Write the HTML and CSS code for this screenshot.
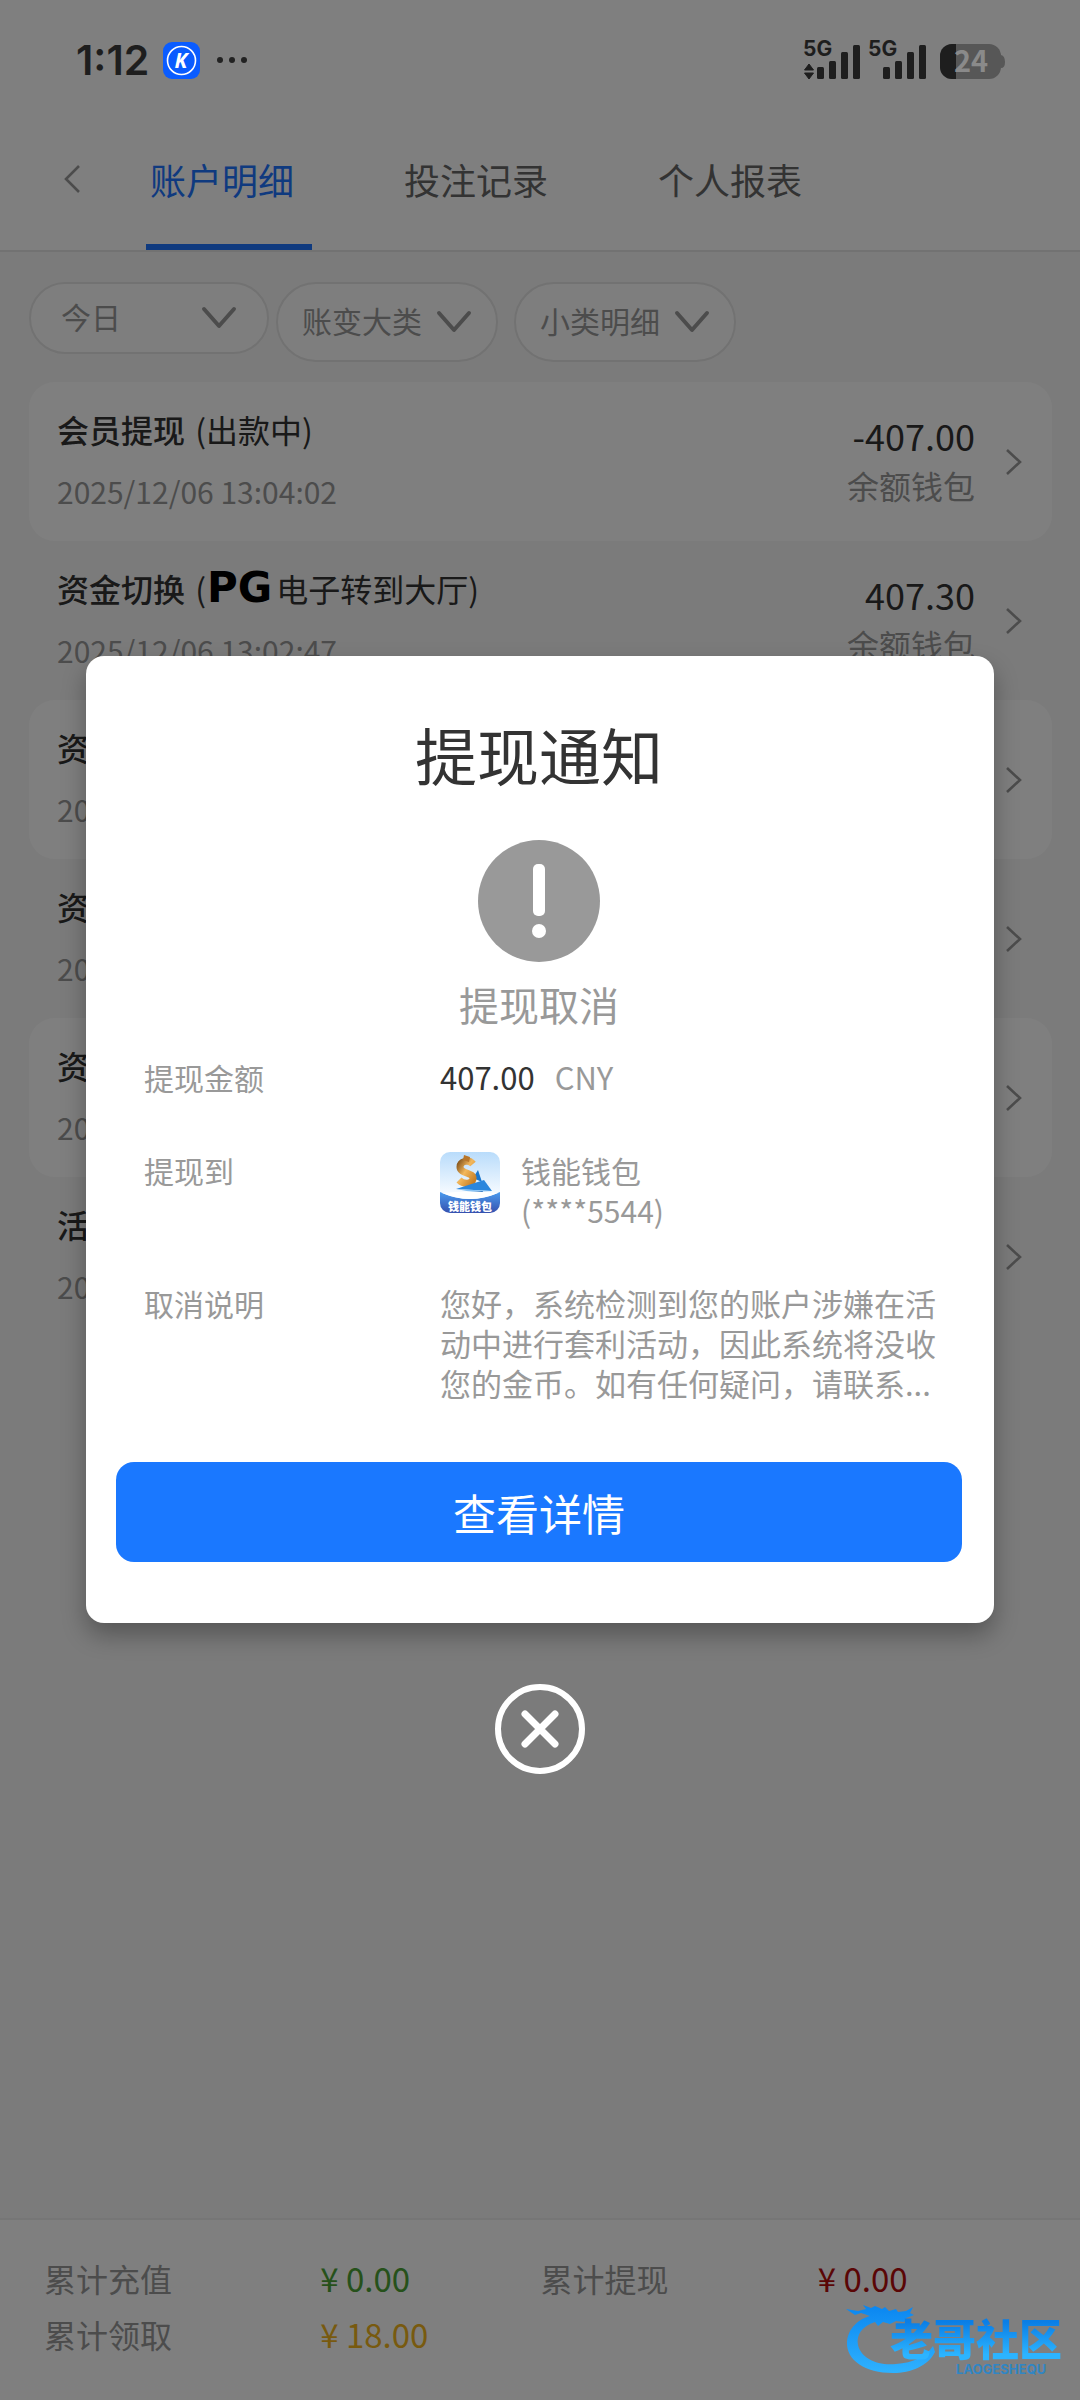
FILE: index.html
```html
<!DOCTYPE html>
<html lang="zh-CN">
<head>
<meta charset="utf-8">
<meta name="viewport" content="width=device-width, initial-scale=1">
<title>账户明细</title>
<link rel="stylesheet" href="styles.css">
</head>
<body>
<svg width="0" height="0" class="defs" aria-hidden="true">
  <symbol id="chev-right" viewBox="0 0 18 30"><path d="M2 3 L15 15 L2 27" fill="none" stroke="currentColor" stroke-width="2.6"/></symbol>
  <symbol id="chev-down" viewBox="0 0 36 24"><path d="M3 3 L18 20 L33 3" fill="none" stroke="currentColor" stroke-width="4" stroke-linecap="round" stroke-linejoin="round"/></symbol>
</svg>
<div class="page">
  <div class="status">
    <span class="clock">1:12</span>
    <svg class="app-icon" width="37" height="37" viewBox="0 0 37 37" aria-hidden="true">
      <rect width="37" height="37" rx="9" fill="#0a5cff"/>
      <circle cx="18.500" cy="18.500" r="14" fill="none" stroke="#fff" stroke-width="1.600"/>
      <text x="18" y="26" text-anchor="middle" class="app-letter">K</text>
    </svg>
    <svg width="32" height="8" viewBox="0 0 32 8" fill="#222" aria-hidden="true"><circle cx="4" cy="4" r="3"/><circle cx="16" cy="4" r="3"/><circle cx="28" cy="4" r="3"/></svg>
    <svg class="signals" width="206" height="56" viewBox="-2 -6 206 56" aria-hidden="true">
      <g fill="#1e1e1e">
        <text x="0" y="18" class="net">5G</text>
        <path d="M6 26l4.500 6h-9zM6 41l4.500-6h-9z" stroke="#1e1e1e" stroke-linejoin="round"/>
        <rect x="14" y="29" width="7" height="12" rx="1.500"/><rect x="26" y="23" width="7" height="18" rx="1.500"/><rect x="38" y="14" width="7" height="27" rx="1.500"/><rect x="50" y="7" width="7" height="34" rx="1.500"/>
        <text x="65" y="18" class="net">5G</text>
        <rect x="80" y="29" width="7" height="12" rx="1.500"/><rect x="92" y="23" width="7" height="18" rx="1.500"/><rect x="104" y="14" width="7" height="27" rx="1.500"/><rect x="116" y="7" width="7" height="34" rx="1.500"/>
        <rect x="137" y="6" width="61" height="35" rx="12" fill="#575757"/>
        <path d="M198 17q4 1 4 7t-4 6z" fill="#575757"/>
        <path d="M153 6h-4a12 12 0 0 0-12 12v11a12 12 0 0 0 12 12h4z"/>
      </g>
      <text x="151" y="34" class="charge">24</text>
    </svg>
  </div>

  <header class="topbar">
    <button class="back" type="button" aria-label="返回"><svg width="18" height="30" viewBox="0 0 18 30"><path d="M16 2 L3 15 L16 28" fill="none" stroke="currentColor" stroke-width="2.600"/></svg></button>
    <nav class="tabs">
      <a class="tab tab-active" href="#detail">账户明细</a>
      <a class="tab" href="#bets">投注记录</a>
      <a class="tab" href="#report">个人报表</a>
    </nav>
  </header>

  <main class="content">
    <div class="filters">
      <div class="filter filter-day"><select aria-label="日期"><option>今日</option></select><svg width="36" height="24"><use href="#chev-down"/></svg></div>
      <div class="filter"><select aria-label="账变大类"><option>账变大类</option></select><svg width="36" height="24"><use href="#chev-down"/></svg></div>
      <div class="filter filter-last"><select aria-label="小类明细"><option>小类明细</option></select><svg width="36" height="24"><use href="#chev-down"/></svg></div>
    </div>
    <ul class="records">
      <li class="record">
        <div class="info"><p class="name"><b>会员提现</b> (出款中)</p><time class="date">2025/12/06 13:04:02</time></div>
        <div class="sum"><p class="amount">-407.00</p><p class="wallet">余额钱包</p></div>
        <svg class="go" width="18" height="30"><use href="#chev-right"/></svg>
      </li>
      <li class="record">
        <div class="info"><p class="name"><b>资金切换</b> (<span class="pg">PG</span>电子转到大厅)</p><time class="date">2025/12/06 13:02:47</time></div>
        <div class="sum"><p class="amount">407.30</p><p class="wallet">余额钱包</p></div>
        <svg class="go" width="18" height="30"><use href="#chev-right"/></svg>
      </li>
      <li class="record">
        <div class="info"><p class="name"><b>资金切换</b></p><time class="date">2025/12/06</time></div>
        <svg class="go" width="18" height="30"><use href="#chev-right"/></svg>
      </li>
      <li class="record">
        <div class="info"><p class="name"><b>资金切换</b></p><time class="date">2025/12/06</time></div>
        <svg class="go" width="18" height="30"><use href="#chev-right"/></svg>
      </li>
      <li class="record">
        <div class="info"><p class="name"><b>资金切换</b></p><time class="date">2025/12/06</time></div>
        <svg class="go" width="18" height="30"><use href="#chev-right"/></svg>
      </li>
      <li class="record">
        <div class="info"><p class="name"><b>活动</b></p><time class="date">2025/12/06</time></div>
        <svg class="go" width="18" height="30"><use href="#chev-right"/></svg>
      </li>
    </ul>
  </main>

  <footer class="totals">
    <span>累计充值</span><span class="total green">¥ 0.00</span>
    <span>累计提现</span><span class="total red">¥ 0.00</span>
    <span>累计领取</span><span class="total gold">¥ 18.00</span>
  </footer>

  <div class="overlay">
    <section class="modal" role="dialog" aria-labelledby="modal-title">
      <h1 class="modal-title" id="modal-title">提现通知</h1>
      <svg class="alert" width="122" height="122" viewBox="0 0 122 122" aria-hidden="true">
        <circle cx="61" cy="61" r="61" fill="#999"/>
        <rect x="55" y="24" width="12" height="52" rx="5" fill="#fff"/>
        <circle cx="61" cy="91" r="7" fill="#fff"/>
      </svg>
      <p class="state">提现取消</p>
      <dl class="facts">
        <dt>提现金额</dt>
        <dd><span class="value">407.00</span><span class="unit">CNY</span></dd>
        <dt>提现到</dt>
        <dd class="target">
          <svg class="wallet-icon" width="60" height="61" viewBox="0 0 60 61" aria-hidden="true">
            <defs>
              <linearGradient id="sky" x1="0" y1="0" x2="0" y2="1"><stop offset="0" stop-color="#b9dcfb"/><stop offset=".65" stop-color="#f3f9ff"/></linearGradient>
              <linearGradient id="sea" x1="0" y1="0" x2="0" y2="1"><stop offset="0" stop-color="#4b9bee"/><stop offset="1" stop-color="#3550ae"/></linearGradient>
              <linearGradient id="coin" x1="0" y1="0" x2="1" y2="1"><stop offset="0" stop-color="#8a5a20"/><stop offset=".45" stop-color="#f3b85c"/><stop offset="1" stop-color="#c87f25"/></linearGradient>
              <clipPath id="tile"><rect width="60" height="61" rx="10"/></clipPath>
            </defs>
            <g clip-path="url(#tile)">
              <rect width="60" height="61" fill="url(#sky)"/>
              <path d="M33 26l5-8 4 12z" fill="#1b78cf"/>
              <path d="M33 12c-4-5-13-3-13 3 0 7 14 5 13 12-1 5-9 6-14 1" fill="none" stroke="url(#coin)" stroke-width="7"/>
              <path d="M24 3l6 2-1 5-6-2z" fill="#b8762a"/>
              <path d="M16 37l28-9 8 11z" fill="#2a86dd"/><path d="M16 37l36 2-20 1z" fill="#86c2f5"/><path d="M32 40l11-1-2 4z" fill="#1b66b5"/>
              <path d="M0 40q30 14 60 0v21H0z" fill="url(#sea)"/>
              <path d="M2 41q28-3 56 0-28 12-56 0z" fill="#fff"/>
              <text x="30" y="59" text-anchor="middle" class="icon-text">钱能钱包</text>
            </g>
          </svg>
          <div>钱能钱包<br>(****5544)</div>
        </dd>
        <dt>取消说明</dt>
        <dd class="reason">您好，系统检测到您的账户涉嫌在活动中进行套利活动，因此系统将没收您的金币。如有任何疑问，请联系...</dd>
      </dl>
      <button class="primary" type="button">查看详情</button>
    </section>
    <button class="close" type="button" aria-label="关闭">
      <svg width="90" height="90" viewBox="0 0 90 90"><circle cx="45" cy="45" r="42" fill="none" stroke="#fff" stroke-width="6"/><path d="M30 30l30 30M60 30L30 60" stroke="#fff" stroke-width="7" stroke-linecap="round"/></svg>
    </button>
  </div>

  <div class="watermark">
    <svg class="dragon" width="94" height="72" viewBox="0 0 94 72" aria-hidden="true">
      <defs><linearGradient id="wave" x1="0" y1="0" x2="0" y2="1"><stop offset="0" stop-color="#0a86f0"/><stop offset="1" stop-color="#2fb2ff"/></linearGradient></defs>
      <path fill="url(#wave)" d="M0 5l12 2 8-2-3-4 8 3 4-2 7 3 3-2 4 4 7-2 2 3 8-1 7-4-3 6 4 2-8 3-2 4-8-1-6 3-7-2-5 4-3-4C16 22 10 31 12 41c3 13 19 21 38 19 17-1 31-8 37-18l2 6c-7 14-24 21-42 21C19 69 0 56 1 38 2 24 13 15 24 12l-9-3-6 2z"/>
    </svg>
    <div class="mark-text"><span class="mark-name">老哥社区</span><span class="mark-latin">LAOGESHEQU</span></div>
  </div>
</div>
</body>
</html>
```
FILE: styles.css
```css
* { box-sizing: border-box; }
body {
  margin: 0;
  background: #fff;
  color: #333;
  font-family: "Noto Sans CJK SC", sans-serif;
}
p, ul, dl, dd, h1 { margin: 0; padding: 0; }
button { border: 0; padding: 0; background: none; font-family: inherit; cursor: pointer; }
.defs { position: absolute; }

.page {
  position: relative;
  min-height: 100vh;
  display: flex;
  flex-direction: column;
}

/* phone status bar stays above the dimmed layer */
.status {
  position: relative;
  z-index: 2;
  display: flex;
  align-items: center;
  height: 120px;
  padding: 0 73px 0 76px;
}
.clock { font: 600 41px/60px Inter, sans-serif; color: #1e1e1e; }
.app-icon { margin: 0 16px 0 14px; }
.app-letter { font: italic 700 21px "Open Sans", sans-serif; fill: #fff; }
.signals { margin-left: auto; }
.net { font: 700 21px Inter, sans-serif; }
.charge { font: 700 29px "Noto Sans CJK SC", sans-serif; fill: #8a8a8a; }

.topbar {
  display: flex;
  height: 132px;
  border-bottom: 2px solid #e4e4e4;
  padding-left: 50px;
}
.back { width: 44px; height: 118px; margin-right: 52px; color: #999; }
.back svg { display: block; margin: auto; }
.tabs { display: flex; gap: 88px; }
.tab {
  width: 166px;
  padding-left: 4px;
  border-bottom: 6px solid transparent;
  font-size: 36px;
  line-height: 118px;
  color: #666;
  text-decoration: none;
}
.tab-active { color: #1e74ff; border-bottom-color: #1e74ff; }

.content { flex: 1; padding: 30px 28px 0 29px; background: #f7f7f7; }
.filters { display: flex; align-items: flex-start; margin-bottom: 20px; }
.filter {
  display: flex;
  align-items: center;
  width: 222px;
  height: 80px;
  padding: 0 24px;
  border: 2px solid #e4e4e4;
  border-radius: 40px;
  background: #fdfdfd;
  color: #999;
}
.filter select {
  flex: 1;
  min-width: 0;
  border: 0;
  padding: 0 0 4px;
  appearance: none;
  background: transparent;
  color: #999;
  font: 30px/44px "Noto Sans CJK SC", sans-serif;
}
.filter-day { width: 240px; height: 72px; padding: 0 30px; margin-right: 7px; }
.filter-last { margin-left: 16px; }

.records { list-style: none; }
.record { display: flex; align-items: center; height: 159px; padding: 0 29px 0 28px; border-radius: 26px; }
.record:nth-child(odd) { background: #fff; }
.info { flex: 1; margin-bottom: 4px; }
.name { font-size: 32px; line-height: 62px; color: #333; white-space: nowrap; }
.name b { margin-right: 3px; font-weight: 500; }
.pg { margin: 0 4px 0 1px; font: 700 42px/40px "DejaVu Sans", sans-serif; color: #000; }
.date { display: block; font-size: 30px; line-height: 62px; color: #999; }
.sum { text-align: right; margin: 0 30px 4px 0; }
.amount { font-size: 36px; line-height: 50px; }
.wallet { font-size: 32px; line-height: 50px; color: #999; }
.go { color: #999; }

.totals {
  display: grid;
  grid-template-columns: 276fr 220fr 277fr 262fr;
  grid-auto-rows: 56px;
  height: 182px;
  padding: 30px 0 0 44px;
  border-top: 2px solid #ececec;
  background: #fff;
  font-size: 32px;
  line-height: 56px;
  color: #999;
}
.total { font-size: 33px; }
.green { color: #4da337; }
.red { color: #b40d0d; }
.gold { color: #f0b41e; }

.overlay {
  position: absolute;
  inset: 0;
  display: flex;
  flex-direction: column;
  align-items: center;
  justify-content: center;
  padding: 30px 86px 0;
  background: rgba(0, 0, 0, .5);
}
.modal {
  width: 100%;
  padding: 58px 32px 61px 30px;
  border-radius: 18px;
  background: #fff;
  box-shadow: 0 12px 24px rgba(0, 0, 0, .3);
}
.modal-title { text-align: center; font-size: 62px; font-weight: 400; line-height: 80px; }
.alert { display: block; margin: 46px auto 17px; }
.state { text-align: center; font-size: 40px; line-height: 50px; color: #999; }
.facts {
  display: grid;
  grid-template-columns: 296px 1fr;
  row-gap: 53px;
  margin: 28px 24px 59px 28px;
  font-size: 30px;
  line-height: 40px;
  color: #999;
}
.value { margin-right: 20px; font-size: 31px; color: #333; }
.unit, .reason { font-size: 31px; }
.target { display: flex; align-items: flex-start; gap: 21px; }
.wallet-icon { margin-top: 2px; }
.icon-text { font: 900 11px "Noto Sans CJK SC", sans-serif; fill: #fff; }
.primary {
  display: block;
  width: 100%;
  height: 100px;
  border-radius: 18px;
  background: #1a78ff;
  color: #fff;
  font-size: 43px;
}
.close { height: 90px; margin-top: 61px; }

.watermark { position: absolute; right: 18px; bottom: 24px; z-index: 3; display: flex; color: #1598ff; }
.mark-text { display: flex; flex-direction: column; align-items: flex-end; margin: 8px 0 0 -50px; }
.mark-name {
  font-size: 43px;
  font-weight: 900;
  line-height: 50px;
  background: linear-gradient(#0a7ee6 20%, #2cb4ff 85%);
  background-clip: text;
  color: transparent;
}
.mark-latin { margin-right: 16px; font: 700 13px/14px Inter, sans-serif; color: #3186c4; }
```
